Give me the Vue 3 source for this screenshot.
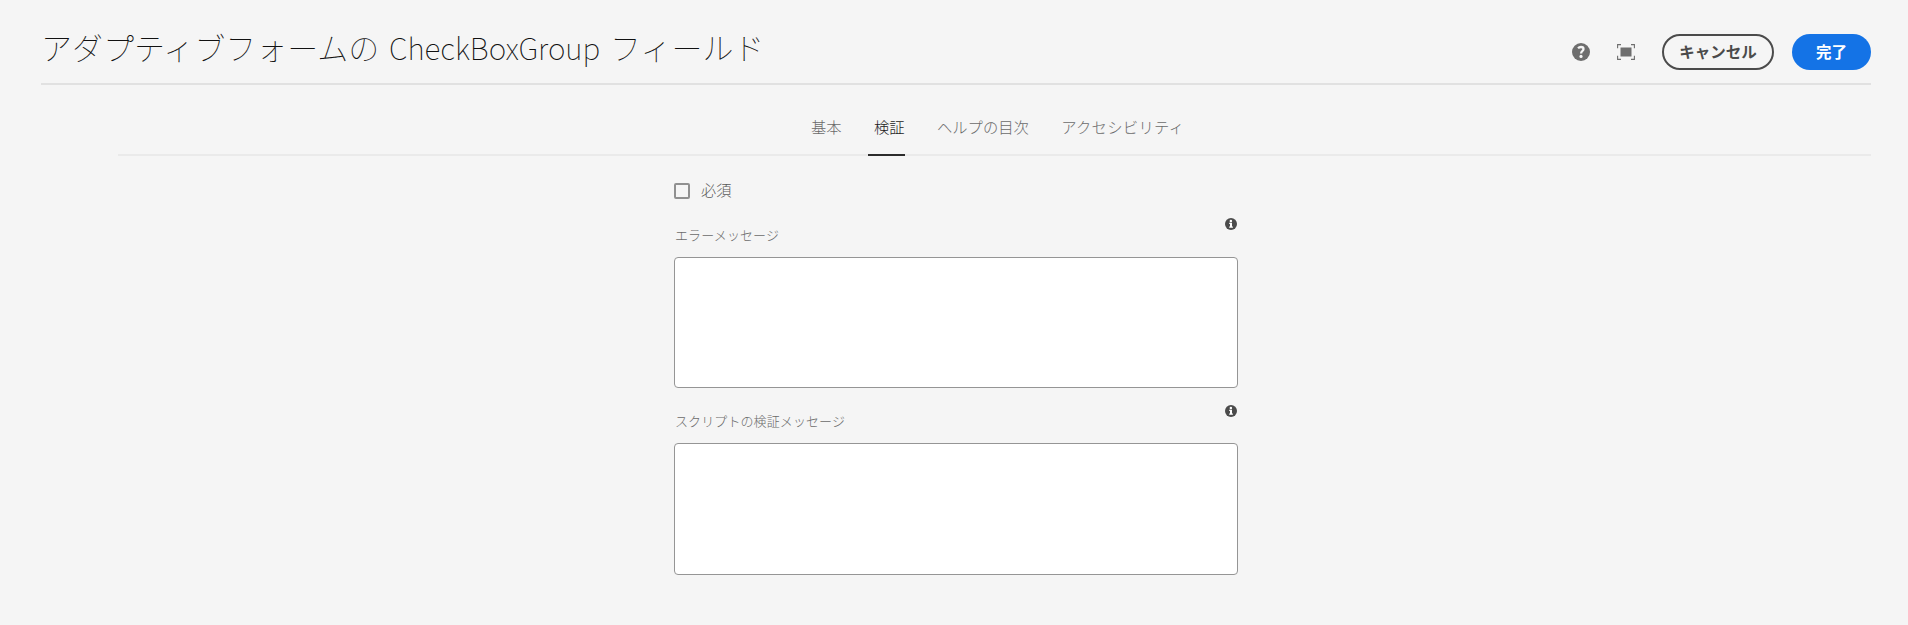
<script setup>
import { ref } from 'vue'

const tabs = [
  { id: 'basic', label: '基本' },
  { id: 'validation', label: '検証' },
  { id: 'help', label: 'ヘルプの目次' },
  { id: 'a11y', label: 'アクセシビリティ' },
]
const active = ref('validation')
const required = ref(false)
const fields = ref([
  { id: 'error', label: 'エラーメッセージ', value: '' },
  { id: 'script', label: 'スクリプトの検証メッセージ', value: '' },
])
</script>

<template>
  <div class="page">
    <header class="header">
      <h1 class="title">アダプティブフォームの <span class="latin">CheckBoxGroup</span> フィールド</h1>
      <div class="actions">
        <button class="icon-btn" aria-label="help">
          <svg width="18" height="18" viewBox="0 0 18 18">
            <circle cx="9" cy="9" r="9" fill="#6e6e6e" />
            <path d="M6 5.2C6.8 4.4 7.9 4 9 4c1.7 0 2.5.8 2.5 2.1 0 1.9-2.4 2-2.4 4.3" fill="none" stroke="#f5f5f5" stroke-width="2.3" />
            <circle cx="9" cy="13.4" r="1.6" fill="#f5f5f5" />
          </svg>
        </button>
        <button class="icon-btn" aria-label="fullscreen">
          <svg width="18" height="16" viewBox="0 0 18 16">
            <rect x="3.5" y="3.5" width="11" height="9" fill="#6e6e6e" />
            <path d="M.6 4.2V.6H4M14 .6h3.4v3.6M17.4 11.8v3.6H14M4 15.4H.6v-3.6" fill="none" stroke="#6e6e6e" stroke-width="1.1" />
          </svg>
        </button>
        <button class="btn cancel">キャンセル</button>
        <button class="btn done">完了</button>
      </div>
    </header>
    <nav class="tabs">
      <button
        v-for="t in tabs"
        :key="t.id"
        class="tab"
        :class="{ selected: t.id === active }"
        @click="active = t.id"
      >{{ t.label }}</button>
    </nav>
    <main class="form">
      <label class="check">
        <input v-model="required" type="checkbox" class="box" />
        <span class="check-text">必須</span>
      </label>
      <section v-for="f in fields" :key="f.id" class="field">
        <div class="field-head">
          <label class="label" :for="f.id">{{ f.label }}</label>
          <svg class="info" width="12" height="12" viewBox="0 0 12 12">
            <circle cx="6" cy="6" r="6" fill="#4b4b4b" />
            <circle cx="5.9" cy="2.9" r="1.25" fill="#fff" />
            <path d="M4.2 4.8h2.8v3.7h.9v1.2H4.2V8.5h.8V6h-.8z" fill="#fff" />
          </svg>
        </div>
        <textarea :id="f.id" v-model="f.value" class="area"></textarea>
      </section>
    </main>
  </div>
</template>

<style>
body {
  background: #f5f5f5;
}
</style>

<style scoped>
.page {
  box-sizing: border-box;
  height: 625px;
  overflow: hidden;
  padding: 0 37px 0 41px;
  background: #f5f5f5;
  font-family: "Noto Sans CJK JP", sans-serif;
  font-weight: 300;
}
button {
  margin: 0;
  padding: 0;
  border: 0;
  background: none;
  font: inherit;
}
.header {
  display: flex;
  justify-content: space-between;
  box-sizing: border-box;
  height: 85px;
  border-bottom: 2px solid #e1e1e1;
}
.title {
  margin: 24px 0 0;
  font-size: 31px;
  line-height: 46px;
  font-weight: 100;
  color: #111;
  white-space: nowrap;
}
.latin {
  margin: 0 3px 0 3px;
  font-size: 29.8px;
}
.actions {
  display: flex;
  align-items: center;
  height: 36px;
  margin-top: 34px;
}
.icon-btn {
  display: flex;
  margin-right: 27px;
}
.btn {
  box-sizing: border-box;
  height: 36px;
  padding-bottom: 2px;
  border-radius: 18px;
  font-size: 15.5px;
  line-height: 30px;
  font-weight: 700;
}
.cancel {
  width: 112px;
  margin-right: 18px;
  border: 2px solid #4b4b4b;
  color: #4b4b4b;
}
.done {
  width: 79px;
  background: #1473e6;
  color: #fff;
}
.tabs {
  display: flex;
  gap: 26.4px;
  box-sizing: border-box;
  height: 71px;
  margin-left: 77px;
  padding-left: 687px;
  border-bottom: 2px solid #eaeaea;
}
.tab {
  height: 71px;
  padding: 13px 0 0 6px;
  border-bottom: 2px solid transparent;
  font-size: 15.3px;
  font-weight: 300;
  color: #6a6a6a;
}
.tab.selected {
  border-color: #2c2c2c;
  color: #1c1c1c;
}
.tab:last-child {
  letter-spacing: 0.3px;
}
.form {
  width: 564px;
  margin-left: 633px;
}
.check {
  display: flex;
  align-items: center;
  gap: 11px;
  height: 24px;
  padding-top: 23px;
  font-size: 15.2px;
  font-weight: 300;
  color: #5a5a5a;
}
.check-text {
  margin-bottom: 4px;
}
.box {
  appearance: none;
  box-sizing: border-box;
  width: 16px;
  height: 16px;
  margin: 0;
  border: 2px solid #909090;
  border-radius: 2px;
}
.field-head {
  display: flex;
  justify-content: space-between;
  box-sizing: border-box;
  height: 54px;
  padding-top: 15px;
}
.label {
  margin: 7px 0 0 1px;
  font-size: 13px;
  line-height: 20px;
  letter-spacing: 0.1px;
  font-weight: 300;
  color: #6a6a6a;
}
.info {
  margin-right: 1.5px;
}
.field + .field .field-head {
  height: 55px;
  padding-top: 17px;
}
.field + .field .label {
  margin-top: 6px;
}
.area {
  display: block;
  box-sizing: border-box;
  width: 564px;
  height: 132px;
  padding: 8px;
  border: 1px solid #959595;
  border-radius: 4px;
  background: #fff;
  resize: none;
  font: inherit;
}
.field:nth-of-type(1) .area {
  height: 131px;
}
</style>
